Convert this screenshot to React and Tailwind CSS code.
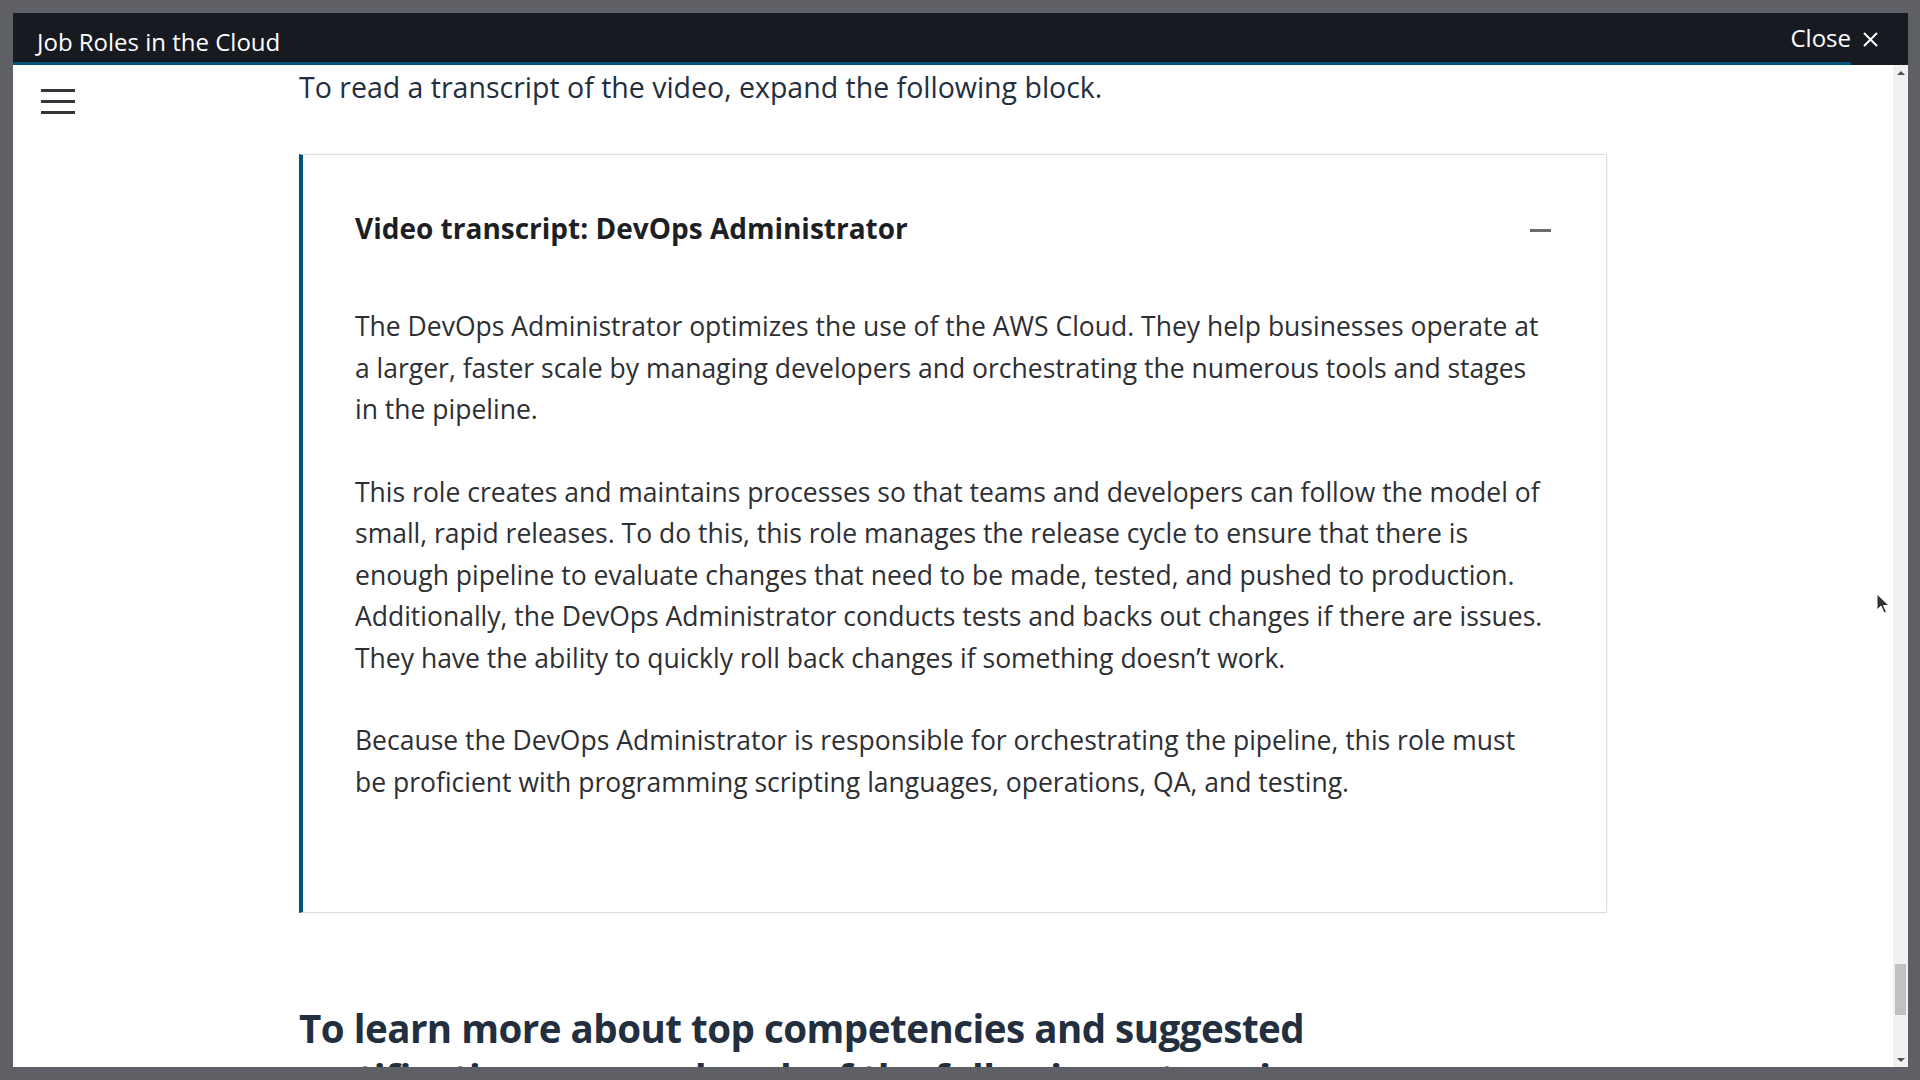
import React from "react";

function Cursor() {
  return (
    <svg className="absolute left-[1863px] top-[580px]" width="14" height="22" viewBox="0 0 14 22">
      <path d="M1 1 L1 17 L5 13 L8 20 L10.5 19 L7.5 12.5 L13 12.5 Z" fill="#333" stroke="#fff" strokeWidth="1" />
    </svg>
  );
}

function Scrollbar() {
  return (
    <div className="w-[15px] bg-[#f1f1f1] flex flex-col items-center">
      <div className="h-[15px] w-full flex items-center justify-center">
        <div className="w-0 h-0 border-l-[4px] border-r-[4px] border-b-[4px] border-l-transparent border-r-transparent border-b-[#505050]" />
      </div>
      <div className="flex-1" />
      <div className="w-[11px] h-[51px] bg-[#c1c1c1]" />
      <div className="h-[37px]" />
      <div className="h-[15px] w-full flex items-center justify-center">
        <div className="w-0 h-0 border-l-[4px] border-r-[4px] border-t-[4px] border-l-transparent border-r-transparent border-t-[#505050]" />
      </div>
    </div>
  );
}

export default function App() {
  return (
    <div
      className="w-[1920px] h-[1080px] bg-[#5f6066] pt-[13px] pl-[13px] pr-[12px] pb-[13px] overflow-hidden"
      style={{ fontFamily: '"Open Sans", "Noto Sans", sans-serif' }}
    >
      <div className="relative flex flex-col h-full bg-white">
        <header className="relative h-[52px] shrink-0 bg-[#181a21] flex items-start justify-between pl-[24px] pr-[29px]">
          <span className="text-white text-[24px] leading-[32px] pt-[13px]">Job Roles in the Cloud</span>
          <button className="flex items-center gap-[11px] text-white text-[24px] leading-[32px] pt-[9px]">
            <span>Close</span>
            <svg width="17" height="17" viewBox="0 0 17 17" className="mt-[3px]">
              <path d="M2 2 L15 15 M15 2 L2 15" stroke="#fff" strokeWidth="2" strokeLinecap="butt" />
            </svg>
          </button>
          <div className="absolute left-0 bottom-0 h-[3px] w-[1838px] bg-[#00547a]" />
        </header>
        <div className="flex flex-1 min-h-0">
          <main className="relative flex-1 overflow-hidden">
            <button className="absolute left-[28px] top-[24px] flex flex-col gap-[8px]">
              <span className="block w-[34px] h-[3px] bg-[#33363a]" />
              <span className="block w-[34px] h-[3px] bg-[#33363a]" />
              <span className="block w-[34px] h-[3px] bg-[#33363a]" />
            </button>
            <div className="w-[1308px] mx-auto">
              <p className="mt-[2px] text-[28.5px] leading-[41px] text-[#232f3e]">
                To read a transcript of the video, expand the following block.
              </p>
              <section className="mt-[46px] bg-white border border-[#dedede] border-l-[4px] border-l-[#00547a] shadow-[0_0_4px_rgba(0,0,0,0.06)] pl-[52px] pr-[57px] pt-[53px] pb-[109px]">
                <div className="flex items-center justify-between">
                  <h3 className="text-[28px] leading-[40px] font-bold text-[#1d1f24]">
                    Video transcript: DevOps Administrator
                  </h3>
                  <span className="block w-[21px] h-[3px] bg-[#6b6b6b] mt-[4px] -mr-[2px]" />
                </div>
                <div className="text-[26.5px] leading-[41.5px] text-[#2d2f33]">
                  <p className="mt-[58px]">
                    The DevOps Administrator optimizes the use of the AWS Cloud. They help businesses operate at a larger, faster scale by managing developers and orchestrating the numerous tools and stages in the pipeline.
                  </p>
                  <p className="mt-[41px]">
                    This role creates and maintains processes so that teams and developers can follow the model of small, rapid releases. To do this, this role manages the release cycle to ensure that there is enough pipeline to evaluate changes that need to be made, tested, and pushed to production. Additionally, the DevOps Administrator conducts tests and backs out changes if there are issues. They have the ability to quickly roll back changes if something doesn’t work.
                  </p>
                  <p className="mt-[41px]">
                    Because the DevOps Administrator is responsible for orchestrating the pipeline, this role must be proficient with programming scripting languages, operations, QA, and testing.
                  </p>
                </div>
              </section>
              <h2 className="mt-[90px] max-w-[1200px] text-[38.5px] leading-[50px] font-bold text-[#232f3e] tracking-[-0.5px]">
                To learn more about top competencies and suggested certifications, expand each of the following categories.
              </h2>
            </div>
          </main>
          <Scrollbar />
        </div>
        <Cursor />
      </div>
    </div>
  );
}
